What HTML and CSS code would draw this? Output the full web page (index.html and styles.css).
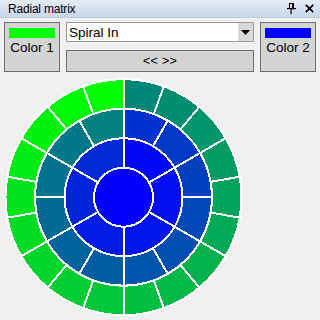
FILE: index.html
```html
<!DOCTYPE html>
<html>
<head>
<meta charset="utf-8">
<link rel="stylesheet" href="styles.css">
</head>
<body>
<div class="win">
  <div class="title">
    <span class="title-text">Radial matrix</span>
    <div class="tools">
      <svg class="pin" width="9" height="11" viewBox="0 0 9 11">
        <path d="M2 0.5H6.5V5.5M2.5 0.5V5.5" fill="none" stroke="#000" stroke-width="1"/>
        <rect x="5" y="0" width="2" height="6" fill="#000"/>
        <rect x="0" y="5" width="9" height="1.2" fill="#000"/>
        <rect x="3.5" y="6" width="1.2" height="5" fill="#000"/>
      </svg>
      <svg class="close" width="9" height="9" viewBox="0 0 9 9">
        <path d="M0.8 0.8L8.2 8.2M8.2 0.8L0.8 8.2" stroke="#000" stroke-width="1.7"/>
      </svg>
    </div>
  </div>
  <div class="controls">
    <div class="colorbtn">
      <span class="swatch swatch-green"></span>
      <span class="label">Color 1</span>
    </div>
    <div class="mid">
      <div class="combo">
        <span class="combo-text">Spiral In</span>
        <span class="drop"><svg width="9" height="5" viewBox="0 0 9 5"><path d="M0 0H9L4.5 5Z" fill="#000"/></svg></span>
      </div>
      <div class="swap">&lt;&lt; &gt;&gt;</div>
    </div>
    <div class="colorbtn">
      <span class="swatch swatch-blue"></span>
      <span class="label">Color 2</span>
    </div>
  </div>
  <svg id="radial" class="radial" width="248" height="248" viewBox="0 0 248 248" shape-rendering="crispEdges"></svg>
</div>
<script src="script.js"></script>
</body>
</html>
```

FILE: styles.css
```css
html, body {
  margin: 0;
  padding: 0;
  background: #f0f0f0;
}
.win {
  width: 320px;
  height: 320px;
  overflow: hidden;
  font-family: "Liberation Sans", Arial, sans-serif;
  color: #000;
}
.title {
  height: 18px;
  box-sizing: border-box;
  background: linear-gradient(#e4ebf5, #c9d7e9);
  border-bottom: 1px solid #c0cddd;
  display: flex;
  align-items: center;
  padding: 0 6px 0 8px;
}
.title-text {
  font-size: 12px;
  flex: 1;
  letter-spacing: -0.2px;
}
.tools {
  display: flex;
  align-items: center;
  gap: 9px;
}
.pin, .close {
  display: block;
}
.controls {
  display: flex;
  gap: 6px;
  padding: 4px 4px 0 4px;
  height: 54px;
  box-sizing: border-box;
}
.colorbtn {
  width: 56px;
  height: 50px;
  box-sizing: border-box;
  background: #d4d4d4;
  border: 1px solid #6e6e6e;
  display: flex;
  flex-direction: column;
  align-items: center;
  padding-top: 5px;
}
.swatch {
  display: block;
  width: 46px;
  height: 10px;
}
.swatch-green { background: #00ff00; }
.swatch-blue { background: #0000ff; }
.label {
  font-size: 13.5px;
  margin-top: 2px;
  line-height: 16px;
}
.mid {
  width: 188px;
  display: flex;
  flex-direction: column;
  gap: 8px;
}
.combo {
  height: 20px;
  box-sizing: border-box;
  background: #fff;
  border: 1px solid #9a9a9a;
  display: flex;
  align-items: center;
}
.combo-text {
  flex: 1;
  font-size: 13.5px;
  padding-left: 2px;
}
.drop {
  width: 15px;
  height: 18px;
  background: #d9d9d9;
  display: flex;
  align-items: center;
  justify-content: center;
}
.drop svg { display: block; }
.swap {
  height: 22px;
  box-sizing: border-box;
  background: #d3d3d3;
  border: 1px solid #6e6e6e;
  font-size: 12.5px;
  display: flex;
  align-items: center;
  justify-content: center;
  letter-spacing: 0.3px;
}
.radial {
  display: block;
}
```

FILE: script.js
```js
(function () {
  var svg = document.getElementById('radial');
  var NS = 'http://www.w3.org/2000/svg';
  var cx = 123.5, cy = 125.2, R = 118, w = R / 4;
  var total = 37;
  function color(i) {
    var t = i / (total - 1);
    var g = Math.round(255 * (1 - t));
    var b = Math.round(255 * t);
    return 'rgb(0,' + g + ',' + b + ')';
  }
  function pt(r, a) {
    var rad = a * Math.PI / 180;
    return (cx + r * Math.cos(rad)).toFixed(2) + ' ' + (cy - r * Math.sin(rad)).toFixed(2);
  }
  var rings = [
    { n: 18, r0: 3 * w, r1: 4 * w, start: 0 },
    { n: 12, r0: 2 * w, r1: 3 * w, start: 18 },
    { n: 6, r0: w, r1: 2 * w, start: 30 }
  ];
  rings.forEach(function (ring) {
    var step = 360 / ring.n;
    for (var k = 0; k < ring.n; k++) {
      var a0 = 90 + k * step, a1 = a0 + step;
      var d = 'M' + pt(ring.r1, a0) +
        ' A' + ring.r1 + ' ' + ring.r1 + ' 0 0 0 ' + pt(ring.r1, a1) +
        ' L' + pt(ring.r0, a1) +
        ' A' + ring.r0 + ' ' + ring.r0 + ' 0 0 1 ' + pt(ring.r0, a0) + ' Z';
      var p = document.createElementNS(NS, 'path');
      p.setAttribute('d', d);
      p.setAttribute('fill', color(ring.start + k));
      p.setAttribute('stroke', '#fff');
      p.setAttribute('stroke-width', '2');
      svg.appendChild(p);
    }
  });
  var c = document.createElementNS(NS, 'circle');
  c.setAttribute('cx', cx);
  c.setAttribute('cy', cy);
  c.setAttribute('r', w);
  c.setAttribute('fill', color(36));
  c.setAttribute('stroke', '#fff');
  c.setAttribute('stroke-width', '2');
  svg.appendChild(c);
})();
```
